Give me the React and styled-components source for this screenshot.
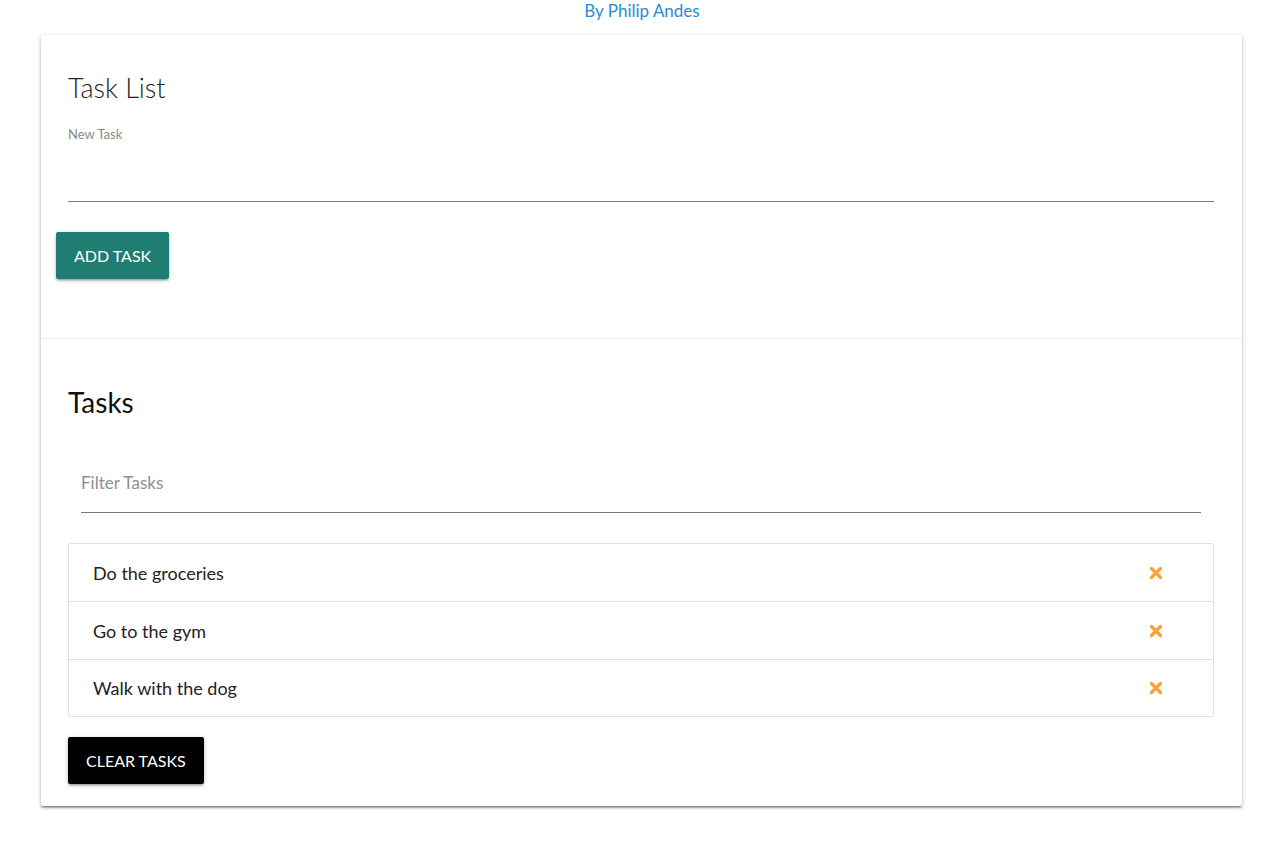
import styled, { createGlobalStyle } from "styled-components";
import { useState } from "react";

const GlobalStyle = createGlobalStyle`
  * {
    box-sizing: border-box;
  }

  body {
    margin: 0;
    background: #fff;
    font-family: Lato, "Open Sans", sans-serif;
    color: #222;
  }
`;

const initialTasks = ["Do the groceries", "Go to the gym", "Walk with the dog"];

// bold "times" glyph used for the delete links
const RemoveIcon = () => (
  <svg width="14" height="14" viewBox="0 0 14 14" aria-hidden="true">
    <path
      d="M2.5 2.5 L11.5 11.5 M11.5 2.5 L2.5 11.5"
      stroke="currentColor"
      strokeWidth="3.4"
      strokeLinecap="round"
      fill="none"
    />
  </svg>
);

const App = () => {
  const [tasks, setTasks] = useState(initialTasks);
  const [newTask, setNewTask] = useState("");
  const [filter, setFilter] = useState("");

  const addTask = (e) => {
    e.preventDefault();
    if (!newTask.trim()) return;
    setTasks([...tasks, newTask.trim()]);
    setNewTask("");
  };

  const removeTask = (index) => {
    setTasks(tasks.filter((_, i) => i !== index));
  };

  const visible = tasks
    .map((task, index) => ({ task, index }))
    .filter(({ task }) => task.toLowerCase().includes(filter.toLowerCase()));

  return (
    <>
      <GlobalStyle />
      <Header>
        <Author href="#">By Philip Andes</Author>
      </Header>
      <Card>
        <CardContent>
          <Title>Task List</Title>
          <form onSubmit={addTask}>
            <Label htmlFor="task">New Task</Label>
            <TaskInput
              id="task"
              value={newTask}
              onChange={(e) => setNewTask(e.target.value)}
            />
            <Button type="submit" $color="#207d72" $offset="-12px">
              Add Task
            </Button>
          </form>
        </CardContent>
        <CardAction>
          <SectionTitle>Tasks</SectionTitle>
          <FilterField>
            <FilterInput
              placeholder="Filter Tasks"
              value={filter}
              onChange={(e) => setFilter(e.target.value)}
            />
          </FilterField>
          <Collection>
            {visible.map(({ task, index }) => (
              <Item key={index}>
                <span>{task}</span>
                <Delete
                  href="#"
                  onClick={(e) => {
                    e.preventDefault();
                    removeTask(index);
                  }}
                >
                  <RemoveIcon />
                </Delete>
              </Item>
            ))}
          </Collection>
          <Button type="button" $color="#000" onClick={() => setTasks([])}>
            Clear Tasks
          </Button>
        </CardAction>
      </Card>
    </>
  );
};

const Header = styled.header`
  height: 35px;
  display: flex;
  justify-content: center;
  padding-left: 4px;
`;

const Author = styled.a`
  font-size: 17px;
  line-height: 22px;
  color: #2b8ad3;
  text-decoration: none;
`;

const Card = styled.div`
  width: 1201px;
  margin: 0 0 24px 41px;
  background: #fff;
  border-radius: 2px;
  box-shadow: 0 2px 2px 0 rgba(0, 0, 0, 0.28), 0 3px 1px -2px rgba(0, 0, 0, 0.16),
    0 1px 5px 0 rgba(0, 0, 0, 0.18);
`;

const CardContent = styled.div`
  padding: 35px 28px 59px 27px;
`;

const Title = styled.h1`
  margin: 0;
  font-size: 27px;
  line-height: 36px;
  font-weight: 300;
  color: #222;
`;

const Label = styled.label`
  display: block;
  margin-top: 20px;
  font-size: 13px;
  line-height: 16px;
  color: #8a8a8a;
`;

const TaskInput = styled.input`
  display: block;
  width: 100%;
  height: 60px;
  margin: 0 0 30px;
  padding: 0;
  border: none;
  border-bottom: 1px solid #7a7a7a;
  outline: none;
  font: inherit;
  font-size: 18px;
  background: transparent;
`;

const Button = styled.button`
  display: inline-block;
  height: 47px;
  padding: 0 18px;
  margin-left: ${(p) => p.$offset || "0"};
  border: none;
  border-radius: 2px;
  background: ${(p) => p.$color};
  color: #fff;
  font-family: inherit;
  font-size: 16px;
  text-transform: uppercase;
  cursor: pointer;
  box-shadow: 0 2px 2px 0 rgba(0, 0, 0, 0.14), 0 3px 1px -2px rgba(0, 0, 0, 0.12),
    0 1px 5px 0 rgba(0, 0, 0, 0.2);
`;

const CardAction = styled.div`
  border-top: 1px solid rgba(160, 160, 160, 0.2);
  padding: 45px 28px 22px 27px;
`;

const SectionTitle = styled.h2`
  margin: 0;
  font-size: 28px;
  line-height: 36px;
  font-weight: 400;
  color: #111;
`;

const FilterField = styled.div`
  padding: 32px 13px 0;
`;

const FilterInput = styled.input`
  display: block;
  width: 100%;
  height: 61px;
  padding: 0;
  border: none;
  border-bottom: 1px solid #7a7a7a;
  outline: none;
  font-family: inherit;
  font-size: 17px;
  color: #222;
  background: transparent;

  &::placeholder {
    color: #8f8f8f;
  }
`;

const Collection = styled.ul`
  list-style: none;
  margin: 30px 0 20px;
  padding: 0;
  border: 1px solid #e0e0e0;
  border-radius: 2px;
`;

const Item = styled.li`
  display: flex;
  align-items: center;
  justify-content: space-between;
  height: 58px;
  padding: 0 50px 0 24px;
  font-size: 18px;
  color: #222;
  border-bottom: 1px solid #e0e0e0;

  &:last-child {
    border-bottom: none;
    height: 56px;
  }
`;

const Delete = styled.a`
  display: flex;
  color: #f9a23a;
`;

export default App;
